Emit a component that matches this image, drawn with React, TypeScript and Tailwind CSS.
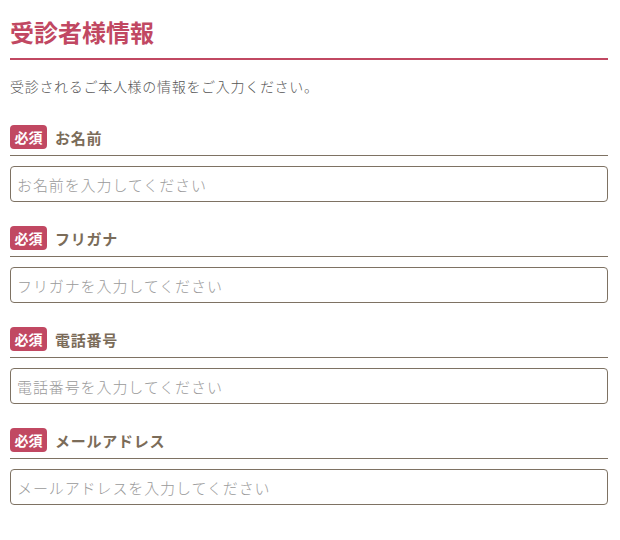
import React from "react";

const fields = [
  { label: "お名前", placeholder: "お名前を入力してください", type: "text" },
  { label: "フリガナ", placeholder: "フリガナを入力してください", type: "text" },
  { label: "電話番号", placeholder: "電話番号を入力してください", type: "tel" },
  { label: "メールアドレス", placeholder: "メールアドレスを入力してください", type: "email" },
];

const Field = ({ label, placeholder, type }: { label: string; placeholder: string; type: string }) => {
  return (
    <div className="flex flex-col">
      <div className="flex items-center gap-2 pb-[6px] border-b border-[#7e7263]">
        <span className="w-[37px] h-[24px] flex items-center justify-center rounded-[4px] bg-[#c14862] text-white text-[14px] font-bold leading-none">
          必須
        </span>
        <span className="text-[15px] font-bold text-[#7b6c59] tracking-[0.05em] leading-none">{label}</span>
      </div>
      <input
        type={type}
        placeholder={placeholder}
        className="mt-[10px] h-[36px] w-full rounded-[4px] border border-[#7e7263] bg-white px-[6px] text-[15px] font-light tracking-[0.06em] text-[#333] placeholder:text-[#9a9a9a] outline-none"
      />
    </div>
  );
};

export default function App() {
  return (
    <div
      className="min-h-[540px] w-[620px] bg-white"
      style={{ fontFamily: '"Noto Sans CJK JP", "Noto Sans", sans-serif' }}
    >
      <div className="ml-[10px] w-[598px] pt-[14px]">
        <h1 className="text-[24px] font-bold leading-[36px] text-[#c14862] pb-2 border-b-2 border-[#c14862]">
          受診者様情報
        </h1>
        <p className="mt-[14px] text-[14px] font-light leading-[24px] tracking-[0.05em] text-[#555]">
          受診されるご本人様の情報をご入力ください。
        </p>
        <div className="mt-[27px] flex flex-col gap-[24px]">
          {fields.map((f) => (
            <Field key={f.label} {...f} />
          ))}
        </div>
      </div>
    </div>
  );
}
